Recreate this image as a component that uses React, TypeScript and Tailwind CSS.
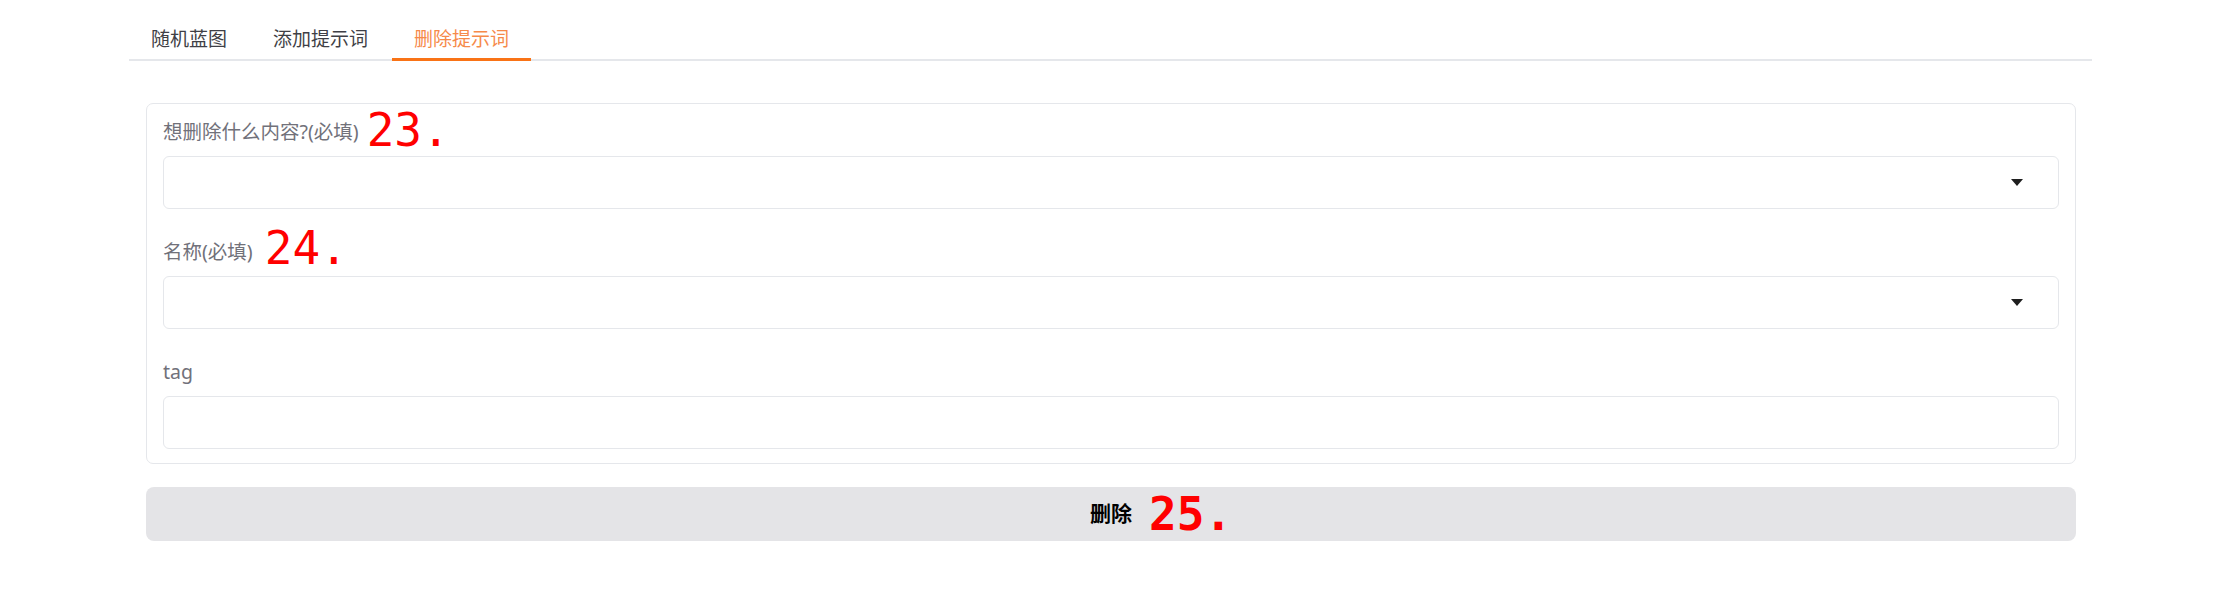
import React from "react";

const font = { fontFamily: '"Noto Sans", "Noto Sans CJK SC", sans-serif' };

function Caret() {
  return (
    <svg width="12" height="7" viewBox="0 0 12 7" className="shrink-0">
      <path d="M0 0 H12 L6 7 Z" fill="#1f1f1f" />
    </svg>
  );
}

function Mark({ n, cls }: { n: string; cls: string }) {
  return (
    <span
      className={"absolute left-full whitespace-nowrap text-[46px] leading-[46px] text-[#ff0000] " + cls}
      style={{ fontFamily: '"DejaVu Sans Mono", monospace' }}
    >
      {n}
    </span>
  );
}

function Field({ label, mark, markCls, select }: { label: string; mark?: string; markCls?: string; select?: boolean }) {
  return (
    <div className="flex flex-col">
      <div className="h-[28px] leading-[28px] text-[19.5px] text-[#71717a] mb-[10px]">
        <span className="relative inline-block">
          {label}
          {mark && <Mark n={mark} cls={markCls || ""} />}
        </span>
      </div>
      <div className="h-[53px] rounded-[6px] border border-[#e5e7eb] bg-white flex items-center justify-end pr-[35px]">
        {select && <Caret />}
      </div>
    </div>
  );
}

export default function App() {
  const tabs = ["随机蓝图", "添加提示词", "删除提示词"];
  return (
    <div className="w-[2222px] h-[601px] bg-white" style={font}>
      <div className="w-[1963px] ml-[129px] pt-[19px]">
        <div className="flex gap-[2px] h-[42px] border-b-2 border-[#e5e7eb]">
          {tabs.map((t, i) => (
            <div
              key={t}
              className={
                "relative px-[22px] h-[40px] leading-[40px] text-[19px] " +
                (i === 2 ? "text-[#f68a4a]" : "text-[#3f3f46]")
              }
            >
              {t}
              {i === 2 && <div className="absolute left-0 right-0 bottom-[-2px] h-[3px] bg-[#f97316]" />}
            </div>
          ))}
        </div>
        <div className="pt-[42px] pl-[17px] pr-[16px]">
          <div className="rounded-[7px] border border-[#e5e7eb] px-4 pt-[14px] pb-[14px] flex flex-col gap-[29px]">
            <Field label="想删除什么内容?(必填)" mark="23." markCls="ml-[8px] top-[-11px]" select />
            <Field label="名称(必填)" mark="24." markCls="ml-[12px] top-[-13px]" select />
            <Field label="tag" />
          </div>
          <div className="mt-[23px] h-[54px] rounded-[8px] bg-[#e4e4e7] flex items-center justify-center">
            <span className="relative inline-block text-[21px] font-bold text-black">
              删除
              <Mark n="25." cls="ml-[17px] top-1/2 -translate-y-1/2" />
            </span>
          </div>
        </div>
      </div>
    </div>
  );
}
